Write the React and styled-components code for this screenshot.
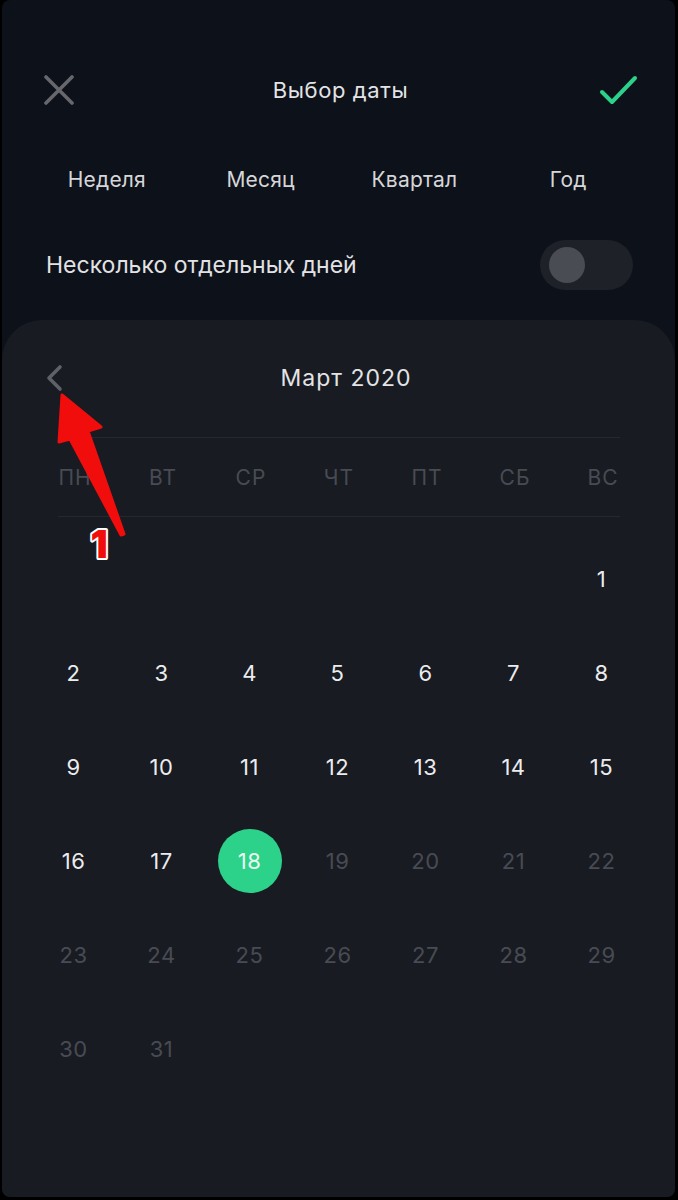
import React from "react";
import styled, { createGlobalStyle } from "styled-components";

const Global = createGlobalStyle`
  html, body { margin: 0; padding: 0; background: #000; }
  body { font-family: Inter, "Noto Sans", Roboto, sans-serif; -webkit-font-smoothing: antialiased; }
`;

const Root = styled.div`
  position: relative;
  width: 678px;
  height: 1200px;
  background: #000;
  padding: 0 3px 3px 2px;
  box-sizing: border-box;
  overflow: hidden;
`;

const Screen = styled.div`
  height: 100%;
  background: #0d1119;
  border-radius: 8px;
  overflow: hidden;
  display: flex;
  flex-direction: column;
`;

const Header = styled.div`
  display: grid;
  grid-template-columns: 1fr auto 1fr;
  align-items: center;
  height: 60px;
  margin-top: 60px;
  padding: 0 37px 0 41px;
`;

const IconButton = styled.div`
  display: flex;
  justify-content: ${(p) => (p.$end ? "flex-end" : "flex-start")};
  align-items: center;
`;

const Title = styled.div`
  color: #e4e4e6;
  font-size: 22px;
  font-weight: 400;
  letter-spacing: 0.6px;
`;

const Tabs = styled.div`
  display: grid;
  grid-template-columns: repeat(4, 1fr);
  margin: 39px 30px 0 28px;
  height: 40px;
  align-items: center;
`;

const Tab = styled.div`
  text-align: center;
  color: #d6d6d9;
  font-size: 21px;
  letter-spacing: 0.2px;
`;

const ToggleRow = styled.div`
  display: flex;
  align-items: center;
  justify-content: space-between;
  height: 50px;
  margin-top: 41px;
  padding: 0 42px 0 44px;
`;

const ToggleLabel = styled.div`
  color: #e2e2e5;
  font-size: 23px;
`;

const Toggle = styled.div`
  position: relative;
  width: 93px;
  height: 50px;
  border-radius: 25px;
  background: #1e2128;
`;

const Knob = styled.div`
  position: absolute;
  left: 9px;
  top: 7px;
  width: 36px;
  height: 36px;
  border-radius: 50%;
  background: #4a4c53;
`;

const Panel = styled.div`
  flex: 1;
  margin-top: 30px;
  background: #181b22;
  border-radius: 40px 40px 0 0;
  display: flex;
  flex-direction: column;
`;

const MonthBar = styled.div`
  position: relative;
  display: flex;
  align-items: center;
  justify-content: center;
  height: 36px;
  margin-top: 40px;
`;

const PrevButton = styled.div`
  position: absolute;
  left: 42px;
  top: 4px;
  display: flex;
`;

const MonthTitle = styled.div`
  color: #e4e4e6;
  font-size: 23px;
  letter-spacing: 1px;
  margin-left: 15px;
`;

const Divider = styled.div`
  height: 1px;
  background: #252830;
  margin: ${(p) => p.$top || 0}px 55px 0 56px;
`;

const Grid = styled.div`
  display: grid;
  grid-template-columns: repeat(7, 88px);
  margin-left: 27px;
`;

const WeekRow = styled(Grid)`
  height: 78px;
  align-items: center;
`;

const WeekDay = styled.div`
  text-align: center;
  color: #484b53;
  font-size: 21px;
  letter-spacing: 1px;
  padding-left: 4px;
`;

const DaysGrid = styled(Grid)`
  margin-top: 15px;
  grid-auto-rows: 94px;
`;

const Day = styled.div`
  display: flex;
  align-items: center;
  justify-content: center;
  font-size: 22px;
  letter-spacing: 0.5px;
  padding-left: 1px;
  color: ${(p) => (p.$muted ? "#484b53" : "#ececee")};
`;

const Selected = styled.div`
  width: 64px;
  height: 64px;
  border-radius: 50%;
  background: #2dd28a;
  color: #e9f7ef;
  display: flex;
  align-items: center;
  justify-content: center;
`;

const Overlay = styled.svg`
  position: absolute;
  left: 0;
  top: 0;
  pointer-events: none;
`;

const weekDays = ["ПН", "ВТ", "СР", "ЧТ", "ПТ", "СБ", "ВС"];
const tabs = ["Неделя", "Месяц", "Квартал", "Год"];

export default function App() {
  const cells = [];
  for (let i = 0; i < 6; i++) cells.push(<Day key={"b" + i} />);
  for (let d = 1; d <= 31; d++) {
    if (d === 18) {
      cells.push(
        <Day key={d}>
          <Selected>{d}</Selected>
        </Day>
      );
    } else {
      cells.push(
        <Day key={d} $muted={d > 18}>
          {d}
        </Day>
      );
    }
  }

  return (
    <Root>
      <Global />
      <Screen>
        <Header>
          <IconButton>
            <svg width="32" height="30" viewBox="0 0 32 30">
              <path d="M3 2 L29 28 M29 2 L3 28" stroke="#66686e" strokeWidth="3.6" strokeLinecap="round" fill="none" />
            </svg>
          </IconButton>
          <Title>Выбор даты</Title>
          <IconButton $end>
            <svg width="40" height="30" viewBox="0 0 40 30">
              <path d="M4 17 L14 27 L37 3" stroke="#2dd28a" strokeWidth="4" strokeLinecap="round" strokeLinejoin="round" fill="none" />
            </svg>
          </IconButton>
        </Header>

        <Tabs>
          {tabs.map((t) => (
            <Tab key={t}>{t}</Tab>
          ))}
        </Tabs>

        <ToggleRow>
          <ToggleLabel>Несколько отдельных дней</ToggleLabel>
          <Toggle>
            <Knob />
          </Toggle>
        </ToggleRow>

        <Panel>
          <MonthBar>
            <PrevButton>
              <svg width="20" height="28" viewBox="0 0 20 28">
                <path d="M16 3 L5 14 L16 25" stroke="#5f6168" strokeWidth="3.6" strokeLinecap="round" strokeLinejoin="round" fill="none" />
              </svg>
            </PrevButton>
            <MonthTitle>Март 2020</MonthTitle>
          </MonthBar>
          <Divider $top={41} />
          <WeekRow>
            {weekDays.map((w) => (
              <WeekDay key={w}>{w}</WeekDay>
            ))}
          </WeekRow>
          <Divider />
          <DaysGrid>{cells}</DaysGrid>
        </Panel>
      </Screen>

      <Overlay width="678" height="1200" viewBox="0 0 678 1200">
        <polygon
          points="62,395 101,427 88,431 124,534 121,535 70,439 59,442"
          fill="#f20d0d"
          stroke="#f20d0d"
          strokeWidth="3"
          strokeLinejoin="round"
        />
        <text
          x="99"
          y="558"
          textAnchor="middle"
          fontFamily="Inter, 'DejaVu Sans', sans-serif"
          fontWeight="900"
          fontSize="38"
          fill="#f20d0d"
          stroke="#ffffff"
          strokeWidth="4"
          paintOrder="stroke"
          strokeLinejoin="round"
        >
          1
        </text>
      </Overlay>
    </Root>
  );
}
